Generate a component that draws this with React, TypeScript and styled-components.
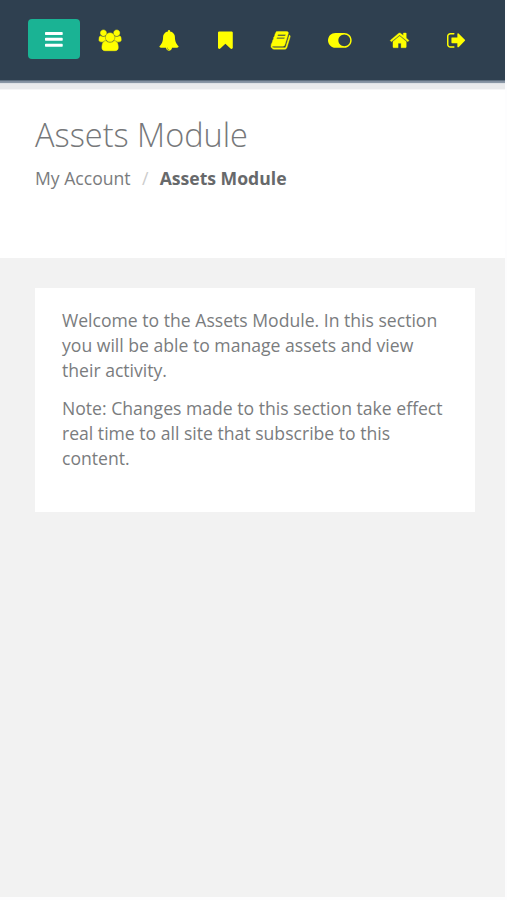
import React from "react";
import styled, { createGlobalStyle } from "styled-components";

const GlobalStyle = createGlobalStyle`
  * { box-sizing: border-box; }
  body {
    margin: 0;
    background: #fdfdfe;
    font-family: "Open Sans", sans-serif;
    font-size: 17.6px;
    line-height: 25px;
    color: #7a7c7e;
  }
`;

const Page = styled.div`
  display: flex;
  flex-direction: column;
  width: 505px;
  height: 897px;
  background: #f2f2f2;
`;

const Navbar = styled.nav`
  display: flex;
  align-items: flex-start;
  height: 90px;
  padding: 19px 0 0 28px;
  background: linear-gradient(
    #2f4050 0 80px,
    #5e6e7e 80px 81px,
    #8390a0 81px 82px,
    #8996a5 82px 83px,
    #dfe2e6 83px 84px,
    #e9eaec 84px 89px,
    #f6f6f7 89px
  );
`;

const MenuButton = styled.button`
  display: flex;
  align-items: center;
  justify-content: center;
  width: 52px;
  height: 40px;
  padding: 0;
  border: 0;
  border-radius: 4px;
  background: #1ab394;
  color: #fff;
`;

const NavLinks = styled.div`
  display: flex;
  align-items: center;
  gap: 38px;
  height: 42.6px;
  margin-left: 19.2px;
`;

const NavLink = styled.a`
  display: flex;
  color: #ff0;
`;

const Glyph = styled.svg`
  display: block;
  flex: none;
  overflow: visible;
  fill: currentColor;
  stroke: currentColor;
`;

const Heading = styled.header`
  height: 168px;
  padding: 25px 35px 0;
  background: #fff;
`;

const Title = styled.h1`
  margin: 0;
  font-size: 32.5px;
  font-weight: 300;
  line-height: 40px;
  color: #76787a;
`;

const Breadcrumb = styled.ol`
  display: flex;
  margin: 11px 0 0;
  padding: 0;
  list-style: none;
`;

const Crumb = styled.li<{ $active?: boolean }>`
  font-weight: ${(p) => (p.$active ? 700 : 400)};
  color: ${(p) => (p.$active ? "#67696b" : "#7a7c7e")};
`;

const Separator = styled.li`
  width: 29px;
  text-align: center;
  color: #ccc;
`;

const Card = styled.main`
  width: 440px;
  height: 224px;
  margin: 30px 0 0 35px;
  padding: 20px 27px;
  background: #fff;
`;

const Paragraph = styled.p`
  margin: 0 0 12.5px;
`;

type GlyphShape = {
  x: number;
  width: number;
  top?: number;
  stroke?: number;
  d: string;
};

const icons: Record<string, GlyphShape> = {
  bars: {
    x: 128, width: 1536,
    d: "M1664 1344v128q0 26-19 45t-45 19h-1408q-26 0-45-19t-19-45v-128q0-26 19-45t45-19h1408q26 0 45 19t19 45zm0-512v128q0 26-19 45t-45 19h-1408q-26 0-45-19t-19-45v-128q0-26 19-45t45-19h1408q26 0 45 19t19 45zm0-512v128q0 26-19 45t-45 19h-1408q-26 0-45-19t-19-45v-128q0-26 19-45t45-19h1408q26 0 45 19t19 45z",
  },
  users: {
    x: 0, width: 1920, stroke: 50,
    d: "M593 896q-162 5-265 128h-134q-82 0-138-40.5t-56-118.5q0-353 124-353 6 0 43.5 21t97.5 42.5 119 21.5q67 0 133-23-5 37-5 66 0 139 81 256zm1071 637q0 120-73 189.5t-194 69.5h-874q-121 0-194-69.5t-73-189.5q0-53 3.5-103.5t14-109 26.5-108.5 43-97.5 62-81 85.5-53.5 111.5-20q10 0 43 21.5t73 48 107 48 135 21.5 135-21.5 107-48 73-48 43-21.5q61 0 111.5 20t85.5 53.5 62 81 43 97.5 26.5 108.5 14 109 3.5 103.5zm-1024-1277q0 106-75 181t-181 75-181-75-75-181 75-181 181-75 181 75 75 181zm704 384q0 159-112.5 271.5t-271.5 112.5-271.5-112.5-112.5-271.5 112.5-271.5 271.5-112.5 271.5 112.5 112.5 271.5zm576 225q0 78-56 118.5t-138 40.5h-134q-103-123-265-128 81-117 81-256 0-29-5-66 66 23 133 23 59 0 119-21.5t97.5-42.5 43.5-21q124 0 124 353zm-128-609q0 106-75 181t-181 75-181-75-75-181 75-181 181-75 181 75 75 181z",
  },
  bell: {
    x: 30, width: 1792,
    d: "M912 1696q0-16-16-16-59 0-101.5-42.5t-42.5-101.5q0-16-16-16t-16 16q0 73 51.5 124.5t124.5 51.5q16 0 16-16zm816-288q0 52-38 90t-90 38h-448q0 106-75 181t-181 75-181-75-75-181h-448q-52 0-90-38t-38-90q50-42 91-88t85-119.5 74.5-158.5 50-206 19.5-260q0-152 117-282.5t307-158.5q-8-19-8-39 0-40 28-68t68-28 68 28 28 68q0 20-8 39 190 28 307 158.5t117 282.5q0 139 19.5 260t50 206 74.5 158.5 85 119.5 91 88z",
  },
  bookmark: {
    x: 256, width: 1280,
    d: "M1420 128q23 0 44 9 33 13 52.5 41t19.5 62v1289q0 34-19.5 62t-52.5 41q-19 8-44 8-48 0-83-32l-441-424-441 424q-36 33-83 33-23 0-44-9-33-13-52.5-41t-19.5-62v-1289q0-34 19.5-62t52.5-41q21-9 44-9h1048z",
  },
  book: {
    x: 64, width: 1664, stroke: 36,
    d: "M1703 478q40 57 18 129l-275 906q-19 64-76.5 107.5t-122.5 43.5h-923q-77 0-148.5-53.5t-99.5-131.5q-24-67-2-127 0-4 3-27t4-37q1-8-3-21.5t-3-19.5q2-11 8-21t16.5-23.5 16.5-23.5q23-38 45-91.5t30-91.5q3-10 .5-30t-.5-28q3-11 17-28t17-23q21-36 42-92t25-90q1-9-2.5-32t.5-28q4-13 22-30.5t22-22.5q19-26 42.5-84.5t27.5-96.5q1-8-3-25.5t-2-26.5q2-8 9-18t18-23 17-21q8-12 16.5-30.5t15-35 16-36 19.5-32 26.5-23.5 36-11.5 47.5 5.5l-1 3q38-9 51-9h761q74 0 114 56t18 130l-274 906q-36 119-71.5 153.5t-128.5 34.5h-869q-27 0-38 15-11 16-1 43 24 70 144 70h923q29 0 56-15.5t35-41.5l300-987q7-22 5-57 38 15 59 43zm-1064 2q-4 13 2 22.5t20 9.5h608q13 0 25.5-9.5t16.5-22.5l21-64q4-13-2-22.5t-20-9.5h-608q-13 0-25.5 9.5t-16.5 22.5zm-83 256q-4 13 2 22.5t20 9.5h608q13 0 25.5-9.5t16.5-22.5l21-64q4-13-2-22.5t-20-9.5h-608q-13 0-25.5 9.5t-16.5 22.5z",
  },
  toggle: {
    x: 0, width: 2048, top: 128,
    d: "M0 1024q0-130 51-248.5t136.5-204 204-136.5 248.5-51h768q130 0 248.5 51t204 136.5 136.5 204 51 248.5-51 248.5-136.5 204-204 136.5-248.5 51h-768q-130 0-248.5-51t-204-136.5-136.5-204-51-248.5zm1408 512q104 0 198.5-40.5t163.5-109.5 109.5-163.5 40.5-198.5-40.5-198.5-109.5-163.5-163.5-109.5-198.5-40.5-198.5 40.5-163.5 109.5-109.5 163.5-40.5 198.5 40.5 198.5 109.5 163.5 163.5 109.5 198.5 40.5z",
  },
  home: {
    x: 64, width: 1664, stroke: 30,
    d: "M1472 992v480q0 26-19 45t-45 19h-384v-384h-256v384h-384q-26 0-45-19t-19-45v-480q0-1 .5-3t.5-3l575-474 575 474q1 2 1 6zm223-69l-62 74q-8 9-21 11h-3q-13 0-21-7l-692-577-692 577q-12 8-24 7-13-2-21-11l-62-74q-8-10-7-23.5t11-21.5l719-599q32-26 76-26t76 26l244 204v-195q0-14 9-23t23-9h192q14 0 23 9t9 23v408l219 182q10 8 11 21.5t-7 23.5z",
  },
  signOut: {
    x: 64, width: 1664,
    d: "M704 1440q0 4 1 20t.5 26.5-3 23.5-10 19.5-20.5 6.5h-320q-119 0-203.5-84.5t-84.5-203.5v-704q0-119 84.5-203.5t203.5-84.5h320q13 0 22.5 9.5t9.5 22.5q0 4 1 20t.5 26.5-3 23.5-10 19.5-20.5 6.5h-320q-66 0-113 47t-47 113v704q0 66 47 113t113 47h312l11.5 1 11.5 3 8 5.5 7 9 2 13.5zm928-544q0 26-19 45l-544 544q-19 19-45 19t-45-19-19-45v-288h-448q-26 0-45-19t-19-45v-384q0-26 19-45t45-19h448v-288q0-26 19-45t45-19 45 19l544 544q19 19 19 45z",
  },
};

const EM = 20.7;

function Icon({ name }: { name: string }) {
  const { x, width, top = 0, stroke = 0, d } = icons[name];
  return (
    <Glyph
      width={(width / 1792) * EM}
      height={EM}
      viewBox={`${x} ${top} ${width} 1792`}
      strokeWidth={stroke}
      aria-hidden="true"
    >
      <path d={d} />
    </Glyph>
  );
}

const links = ["users", "bell", "bookmark", "book", "toggle", "home", "signOut"];

export default function App() {
  return (
    <>
      <GlobalStyle />
      <Page>
        <Navbar>
          <MenuButton aria-label="Menu">
            <Icon name="bars" />
          </MenuButton>
          <NavLinks>
            {links.map((name) => (
              <NavLink key={name} aria-label={name}>
                <Icon name={name} />
              </NavLink>
            ))}
          </NavLinks>
        </Navbar>
        <Heading>
          <Title>Assets Module</Title>
          <Breadcrumb>
            <Crumb>My Account</Crumb>
            <Separator>/</Separator>
            <Crumb $active>Assets Module</Crumb>
          </Breadcrumb>
        </Heading>
        <Card>
          <Paragraph>
            Welcome to the Assets Module. In this section you will be able to
            manage assets and view their activity.
          </Paragraph>
          <Paragraph>
            Note: Changes made to this section take effect real time to all
            site that subscribe to this content.
          </Paragraph>
        </Card>
      </Page>
    </>
  );
}
